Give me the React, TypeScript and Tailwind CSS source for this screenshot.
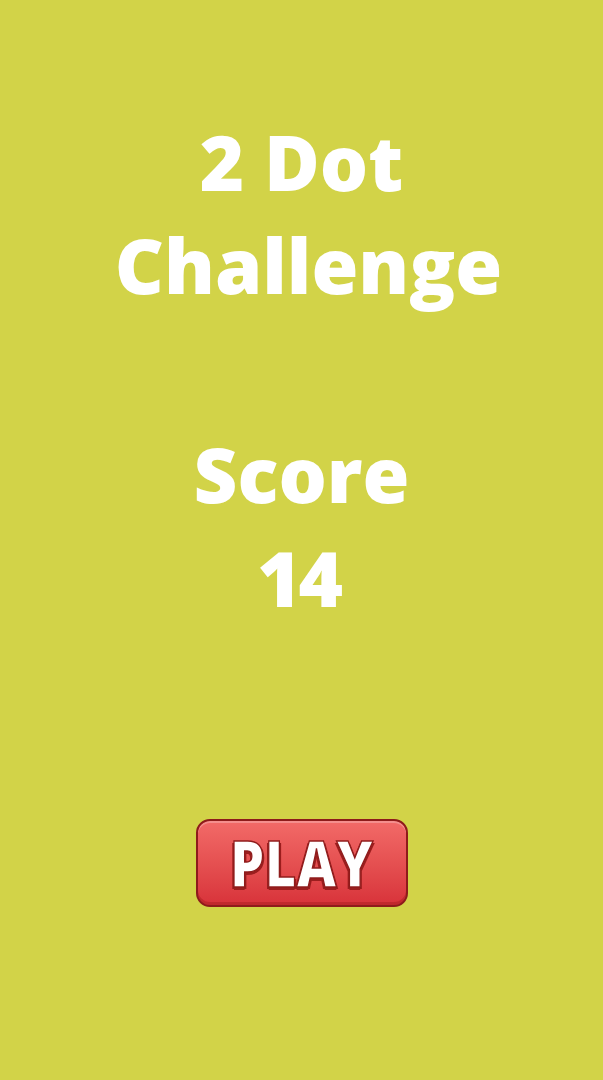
export default function App() {
  return (
    <div className="w-[603px] h-[1080px] bg-[#d2d348] flex flex-col items-center font-['Open_Sans','Lato',sans-serif] text-white">
      <h1 className="mt-[110px] text-center text-[76px] leading-[103px] font-extrabold">
        <div>2 Dot</div>
        <div className="pl-[14px]">Challenge</div>
      </h1>
      <div className="mt-[106px] text-center text-[76px] leading-[104px] font-extrabold">
        <div>Score</div>
        <div className="tracking-[-3px] pr-[6px]">14</div>
      </div>
      <button className="mt-[189px] w-[212px] h-[88px] rounded-[14px] border-2 border-[#8e1b1b] bg-gradient-to-b from-[#f26a68] to-[#d8323a] shadow-[inset_0_2px_0_rgba(255,255,255,0.25),inset_0_-3px_0_rgba(150,20,20,0.35)] flex items-center justify-center">
        <span className="block scale-x-[0.86] text-[64px] leading-none font-black text-white [-webkit-text-stroke:1.5px_#8e1b1b] [text-shadow:0_3px_0_#9b1e1e,2px_2px_0_#9b1e1e,-2px_2px_0_#9b1e1e]">
          PLAY
        </span>
      </button>
    </div>
  );
}
